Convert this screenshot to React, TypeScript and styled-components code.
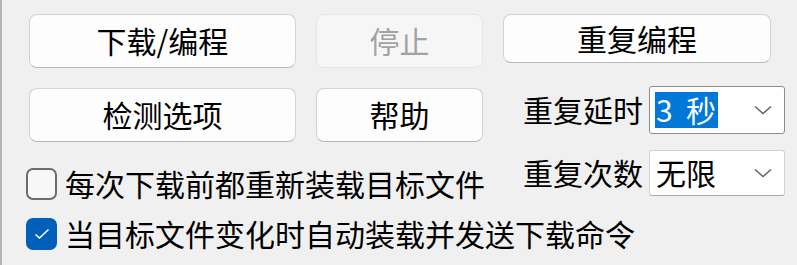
import React from "react";
import styled, { createGlobalStyle } from "styled-components";

const GlobalStyle = createGlobalStyle`
    html, body {
        margin: 0;
        padding: 0;
        background: #f0f0f0;
    }
    body {
        font-family: "Noto Sans CJK SC", "Noto Sans", sans-serif;
    }
`;

const Panel = styled.div`
    box-sizing: border-box;
    width: 797px;
    height: 265px;
    border-left: 2px solid #b4b4b4;
    padding: 14px 0 0 27px;
    background: #f0f0f0;
    font-size: 30px;
    color: #000;
`;

const Grid = styled.div`
    display: grid;
    grid-template-columns: 267px 167px 268px;
    column-gap: 20px;
`;

const TopGrid = styled(Grid)`
    grid-template-rows: 54px 54px;
    row-gap: 20px;
`;

const BottomGrid = styled(Grid)`
    margin-top: 8px;
    grid-template-rows: 50px 33px;
    row-gap: 17px;
`;

const Button = styled.button<{ $short?: boolean }>`
    box-sizing: border-box;
    height: ${(p) => (p.$short ? "49px" : "54px")};
    align-self: start;
    margin: 0;
    padding: 0 0 2px;
    font-family: inherit;
    font-size: 30px;
    line-height: 1;
    color: #000;
    background: #fdfdfd;
    border: 1px solid #d3d3d3;
    border-bottom-color: #b9b9b9;
    border-radius: 8px;

    &:disabled {
        color: #a2a2a2;
        background: #f6f6f6;
        border-color: #e6e6e6;
    }
`;

const FieldRow = styled.div<{ $top: number }>`
    display: flex;
    align-items: center;
    gap: 6px;
    margin-top: ${(p) => p.$top}px;
    padding-left: 20px;
    align-self: start;
    white-space: nowrap;
`;

const FieldLabel = styled.span`
    width: 122px;
    line-height: 1;
    margin-top: -2px;
`;

const Select = styled.div<{ $focused?: boolean; $h: number }>`
    box-sizing: border-box;
    width: 136px;
    height: ${(p) => p.$h}px;
    flex: none;
    display: flex;
    align-items: center;
    padding: 0 12px 0 5px;
    background: #fff;
    border: 1px solid ${(p) => (p.$focused ? "#8c8c8c" : "#d2d2d2")};
    border-bottom-color: ${(p) => (p.$focused ? "#8c8c8c" : "#a8a8a8")};
    border-radius: 3px;
`;

const SelectValue = styled.span<{ $selected?: boolean }>`
    flex: 1;
    display: flex;
    span {
        padding: 2px 2px 4px 1px;
        line-height: 1;
        white-space: pre;
        background: ${(p) => (p.$selected ? "#0078d7" : "transparent")};
        color: ${(p) => (p.$selected ? "#fff" : "#000")};
    }
`;

const Chevron = () => (
    <svg width="18" height="10" viewBox="0 0 18 10">
        <path d="M1 1.5 L9 8.5 L17 1.5" fill="none" stroke="#606060" strokeWidth="1.4" />
    </svg>
);

const CheckRow = styled.label<{ $span: string }>`
    grid-column: ${(p) => p.$span};
    align-self: end;
    margin-left: -3px;
    display: flex;
    align-items: center;
    gap: 8px;
    white-space: nowrap;
    line-height: 1;
`;

const Box = styled.span<{ $checked?: boolean }>`
    box-sizing: border-box;
    width: 31px;
    height: 32px;
    flex: none;
    border-radius: 7px;
    display: flex;
    align-items: center;
    justify-content: center;
    background: ${(p) => (p.$checked ? "#005fb8" : "#f7f7f7")};
    border: 2px solid ${(p) => (p.$checked ? "#005fb8" : "#6c6c6c")};
`;

const CheckText = styled.span`
    margin-top: -2px;
`;

const Checkbox: React.FC<{ checked?: boolean; span: string; text: string }> = ({
    checked,
    span,
    text,
}) => (
    <CheckRow $span={span}>
        <Box $checked={checked}>
            {checked && (
                <svg width="16" height="12" viewBox="0 0 16 12">
                    <path d="M1.5 6.5 L5.5 10 L14.5 1.5" fill="none" stroke="#fff" strokeWidth="1.6" />
                </svg>
            )}
        </Box>
        <CheckText>{text}</CheckText>
    </CheckRow>
);

export default function App() {
    return (
        <>
            <GlobalStyle />
            <Panel>
                <TopGrid>
                    <Button>下载/编程</Button>
                    <Button disabled>停止</Button>
                    <Button $short>重复编程</Button>
                    <Button>检测选项</Button>
                    <Button>帮助</Button>
                    <FieldRow $top={-2}>
                        <FieldLabel>重复延时</FieldLabel>
                        <Select $focused $h={48}>
                            <SelectValue $selected>
                                <span>{"3  秒"}</span>
                            </SelectValue>
                            <Chevron />
                        </Select>
                    </FieldRow>
                </TopGrid>
                <BottomGrid>
                    <Checkbox span="1 / 3" text="每次下载前都重新装载目标文件" />
                    <FieldRow $top={0}>
                        <FieldLabel>重复次数</FieldLabel>
                        <Select $h={46}>
                            <SelectValue>
                                <span>无限</span>
                            </SelectValue>
                            <Chevron />
                        </Select>
                    </FieldRow>
                    <Checkbox checked span="1 / 4" text="当目标文件变化时自动装载并发送下载命令" />
                </BottomGrid>
            </Panel>
        </>
    );
}
